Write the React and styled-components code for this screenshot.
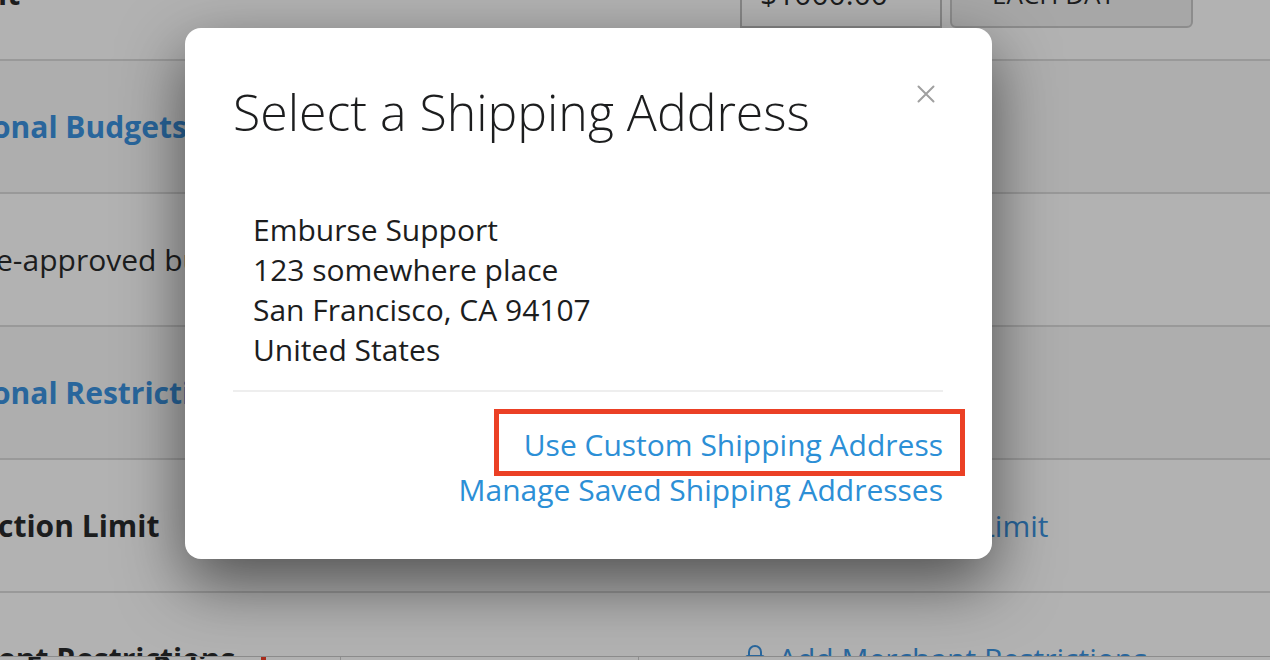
import React from 'react';
import styled, { createGlobalStyle } from 'styled-components';

const GlobalStyle = createGlobalStyle`
  * { box-sizing: border-box; }
  body { margin: 0; background: #b2b2b2; font-family: "Open Sans", "Noto Sans", sans-serif; font-size: 30px; line-height: 40px; color: #1c1d1e; }
`;

const Page = styled.div`
  position: relative;
  height: 100vh;
  overflow: hidden;
  display: flex;
  flex-direction: column;
`;

const Rows = styled.main`
  flex: 1;
  min-height: 0;
  overflow: hidden;
`;

const Row = styled.section`
  display: grid;
  grid-template-columns: 740px 1fr;
  align-items: center;
  height: 133px;
  border-bottom: 2px solid #999;
  white-space: nowrap;
  background: ${(p) => (p.$section ? '#aeaeae' : '#b2b2b2')};
  &:first-child { margin-top: -72px; }
`;

const Label = styled.label`
  margin-left: -2px;
  font-weight: 700;
`;

const Note = styled.span`
  margin-left: -4px;
`;

const Heading = styled.h3`
  margin: 0 0 0 -8px;
  font-size: 30px;
  font-weight: 700;
  color: #29669c;
`;

const Controls = styled.div`
  display: flex;
  gap: 8px;
`;

const AmountInput = styled.input`
  width: 202px;
  height: 68px;
  padding: 0 18px;
  border: 2px solid #868686;
  background: transparent;
  font: inherit;
  color: inherit;
`;

const PeriodSelect = styled.select`
  appearance: none;
  width: 243px;
  height: 68px;
  padding: 0 40px;
  border: 2px solid #8c8c8c;
  border-radius: 6px;
  background: #a7a7a7;
  font: inherit;
  font-size: 26px;
  color: inherit;
`;

const RowLink = styled.a`
  display: flex;
  align-items: center;
  gap: 12px;
  padding-left: 4px;
  color: #29669c;
  text-decoration: none;
`;

const Footer = styled.footer`
  display: grid;
  grid-template-columns: 341px 298px 1fr;
  height: 4px;
  overflow: hidden;
  border-top: 1px solid #8c8c8c;
  font-size: 29px;
  font-weight: 700;
  line-height: 18px;
`;

const FooterCell = styled.div`
  display: flex;
  justify-content: space-between;
  padding: 0 74px 0 26px;
  border-right: 1px solid #909090;
`;

const RequiredMark = styled.span`
  width: 5px;
  background: #a82c1c;
`;

const Overlay = styled.div`
  position: absolute;
  inset: 0;
  display: flex;
  justify-content: center;
  align-items: flex-start;
  padding: 28px 93px 0 0;
`;

const Dialog = styled.div`
  width: 807px;
  padding: 48px 49px 47px 48px;
  border-radius: 16px;
  background: #fff;
  box-shadow: 0 24px 64px rgba(0, 0, 0, 0.55);
`;

const DialogHeader = styled.header`
  display: flex;
  justify-content: space-between;
  align-items: flex-start;
`;

const Title = styled.h2`
  margin: 0;
  font-size: 50px;
  font-weight: 300;
  line-height: 72px;
`;

const CloseButton = styled.button`
  display: flex;
  padding: 9px 8px;
  border: 0;
  background: none;
  color: #a0a0a0;
`;

const Address = styled.address`
  padding: 62px 20px 20px;
  border-bottom: 2px solid #eee;
  font-style: normal;
`;

const Actions = styled.div`
  display: flex;
  flex-direction: column;
  align-items: flex-end;
`;

const ActionLink = styled.a`
  line-height: 44px;
  color: #2c8fd6;
  text-decoration: none;
`;

const Highlight = styled.div`
  display: flex;
  margin: 17px -22px -8px 0;
  padding: 9px 17px 4px 25px;
  border: 5px solid #eb4025;
`;

function LockIcon() {
  return (
    <svg width="22" height="28" viewBox="0 0 22 28" fill="none" stroke="currentColor" strokeWidth="2" aria-hidden="true">
      <path d="M5 11V7a6 6 0 0 1 12 0v4" />
      <rect x="2" y="11" width="18" height="15" rx="2" />
    </svg>
  );
}

export default function App() {
  return (
    <>
      <GlobalStyle />
      <Page>
        <Rows>
          <Row>
            <Label htmlFor="amount">it</Label>
            <Controls>
              <AmountInput id="amount" defaultValue="$1000.00" />
              <PeriodSelect aria-label="Period"><option>EACH DAY</option></PeriodSelect>
            </Controls>
          </Row>
          <Row $section><Heading>onal Budgets</Heading></Row>
          <Row><Note>e-approved budgets</Note></Row>
          <Row $section><Heading>onal Restrictions</Heading></Row>
          <Row>
            <Label as="span">ction Limit</Label>
            <RowLink href="#limit">Add Transaction Limit</RowLink>
          </Row>
          <Row>
            <Label as="span">ent Restrictions</Label>
            <RowLink href="#merchant"><LockIcon />Add Merchant Restrictions</RowLink>
          </Row>
        </Rows>
        <Footer>
          <FooterCell>Expense Policy<RequiredMark /></FooterCell>
          <FooterCell />
        </Footer>
        <Overlay>
          <Dialog role="dialog" aria-modal="true" aria-labelledby="title">
            <DialogHeader>
              <Title id="title">Select a Shipping Address</Title>
              <CloseButton type="button" aria-label="Close">
                <svg width="18" height="18" viewBox="0 0 18 18" fill="none" stroke="currentColor" strokeWidth="2" strokeLinecap="round"><path d="M1.5 1.5l15 15M16.5 1.5l-15 15" /></svg>
              </CloseButton>
            </DialogHeader>
            <Address>
              Emburse Support<br />123 somewhere place<br />San Francisco, CA 94107<br />United States
            </Address>
            <Actions>
              <Highlight><ActionLink href="#custom">Use Custom Shipping Address</ActionLink></Highlight>
              <ActionLink href="#manage">Manage Saved Shipping Addresses</ActionLink>
            </Actions>
          </Dialog>
        </Overlay>
      </Page>
    </>
  );
}
